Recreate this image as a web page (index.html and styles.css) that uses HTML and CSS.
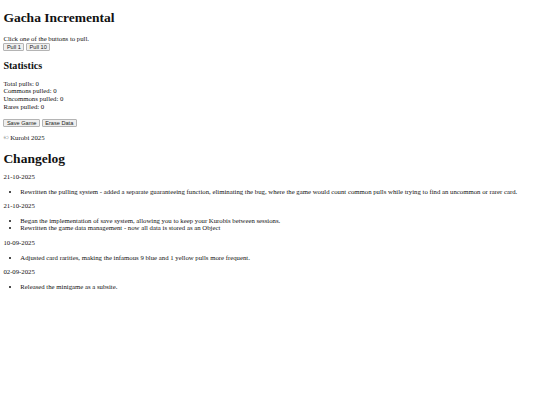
FILE: index.html
```html
<!DOCTYPE html>
<html>
<head>
<meta charset="utf-8">
<title>Gacha Incremental</title>
<link rel="stylesheet" href="styles.css">
</head>
<body>
<h1 class="title first">Gacha Incremental</h1>
<div class="intro">Click one of the buttons to pull.</div>
<div class="btns">
  <button class="btn">Pull 1</button>
  <button class="btn">Pull 10</button>
</div>
<h2 class="sub">Statistics</h2>
<div class="stats">
  <div>Total pulls: 0</div>
  <div>Commons pulled: 0</div>
  <div>Uncommons pulled: 0</div>
  <div>Rares pulled: 0</div>
</div>
<div class="btns save">
  <button class="btn">Save Game</button>
  <button class="btn">Erase Data</button>
</div>
<p class="copy">© Kurobi 2025</p>
<h1 class="title log">Changelog</h1>
<p class="date">21-10-2025</p>
<ul class="list">
  <li>Rewritten the pulling system - added a separate guaranteeing function, eliminating the bug, where the game would count common pulls while trying to find an uncommon or rarer card.</li>
</ul>
<p class="date">21-10-2025</p>
<ul class="list">
  <li>Began the implementation of save system, allowing you to keep your Kurobis between sessions.</li>
  <li>Rewritten the game data management - now all data is stored as an Object</li>
</ul>
<p class="date">10-09-2025</p>
<ul class="list">
  <li>Adjusted card rarities, making the infamous 9 blue and 1 yellow pulls more frequent.</li>
</ul>
<p class="date">02-09-2025</p>
<ul class="list">
  <li>Released the minigame as a subsite.</li>
</ul>
</body>
</html>
```

FILE: styles.css
```css
body {
  margin: 3.375px;
  font-family: "Liberation Serif", "Times New Roman", serif;
  font-size: 6.75px;
  line-height: 7.76px;
  color: #111;
  background: #fff;
}
.title {
  font-size: 13.5px;
  line-height: 15.5px;
  font-weight: bold;
  margin: 9.04px 0;
}
.title.first {
  margin-top: 7px;
}
.title.log {
  margin-bottom: 7px;
}
.sub {
  font-size: 10.125px;
  line-height: 11.6px;
  font-weight: bold;
  margin: 8.4px 0;
}
.intro {
  margin: 0;
}
.btns {
  display: flex;
  gap: 1.7px;
}
.btns.save {
  margin-top: 8px;
}
.btn {
  font-family: "Liberation Sans", Arial, sans-serif;
  font-size: 5.625px;
  line-height: 6.5px;
  padding: 0 2.5px;
  background: #efefef;
  border: 1px solid #b4b4b4;
  border-radius: 1px;
  color: #222;
}
.copy {
  margin: 6.75px 0;
}
.date {
  margin: 6.75px 0;
}
.list {
  margin: 6.75px 0;
  padding-left: 16.9px;
}
```
